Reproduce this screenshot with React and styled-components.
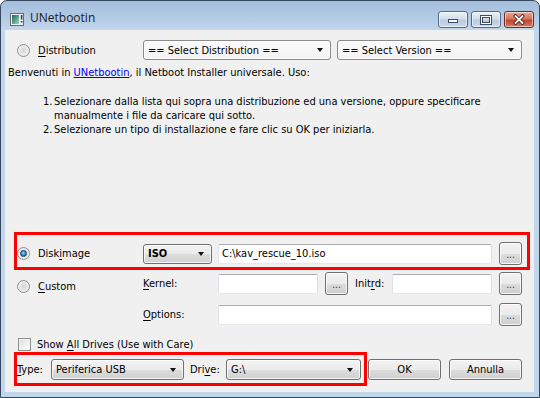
import React from 'react';
import styled, { createGlobalStyle, css } from 'styled-components';

const GlobalStyle = createGlobalStyle`
  html, body {
    margin: 0;
    padding: 0;
    background: #ffffff;
  }
  body {
    font-family: "DejaVu Sans Condensed", "Liberation Sans", sans-serif;
    font-size: 11px;
    color: #000000;
  }
`;

const Window = styled.div`
  box-sizing: border-box;
  width: 540px;
  height: 398px;
  display: flex;
  flex-direction: column;
  padding: 0 5px 5px 4px;
  border: 1px solid #36495e;
  border-radius: 7px 7px 0 0;
  background: linear-gradient(180deg, #a3bedc 0px, #b6cde6 20px, #c3d7ec 29px, #c3d7ec 100%);
`;

const TitleBar = styled.div`
  height: 29px;
  display: flex;
  align-items: flex-start;
  flex: none;
`;

const AppIcon = styled.svg`
  margin: 12px 0 0 5px;
  flex: none;
`;

const Title = styled.div`
  margin: 9px 0 0 6px;
  font-family: "Open Sans", "Noto Sans", sans-serif;
  font-size: 12px;
  line-height: 16px;
  color: #1b1b1b;
  flex: 1;
`;

const CaptionGroup = styled.div`
  display: flex;
  gap: 3px;
  margin-top: 10px;
`;

const CaptionButton = styled.div`
  box-sizing: border-box;
  width: 30px;
  height: 17px;
  display: flex;
  align-items: center;
  justify-content: center;
  border: 1px solid ${(p) => (p.danger ? '#6e2b23' : '#56698a')};
  border-radius: 3px;
  background: ${(p) =>
    p.danger
      ? 'linear-gradient(180deg, #eaa796 0%, #d4765f 45%, #c2442e 55%, #d77a60 100%)'
      : 'linear-gradient(180deg, #eaf0f8 0%, #d3deec 45%, #b9cbe0 55%, #cbd9eb 100%)'};
  box-shadow: inset 0 0 0 1px rgba(255, 255, 255, 0.55);
`;

const Client = styled.div`
  flex: 1;
  display: flex;
  flex-direction: column;
  padding: 10px 12px 12px 12px;
  background: #f0f0f0;
`;

const Row = styled.div`
  display: flex;
  align-items: center;
  height: ${(p) => p.h || 23}px;
  margin-top: ${(p) => p.mt || 0}px;
  flex: none;
`;

const Marked = styled.div`
  position: relative;
  display: flex;
  align-items: center;
  flex: ${(p) => (p.grow ? 1 : 'none')};
  height: 100%;
  &::after {
    content: '';
    position: absolute;
    top: ${(p) => p.t}px;
    left: ${(p) => p.l}px;
    right: ${(p) => p.r}px;
    bottom: ${(p) => p.b}px;
    border: 3px solid #ff0000;
    pointer-events: none;
  }
`;

const Choice = styled.div`
  width: 126px;
  display: flex;
  align-items: center;
  gap: 8px;
  flex: none;
  align-self: ${(p) => (p.top ? 'flex-start' : 'center')};
  margin-top: ${(p) => (p.top ? 8 : 0)}px;
`;

const Radio = styled.span`
  box-sizing: border-box;
  position: relative;
  width: 13px;
  height: 13px;
  flex: none;
  border-radius: 50%;
  border: 1px solid #8c8e8f;
  background: radial-gradient(circle at 50% 50%, #d4d4d4 0%, #e6e6e6 45%, #fbfbfb 100%);
  ${(p) =>
    p.checked &&
    css`
      &::after {
        content: '';
        position: absolute;
        left: 2px;
        top: 2px;
        width: 7px;
        height: 7px;
        border-radius: 50%;
        box-sizing: border-box;
        border: 1px solid #17405f;
        background: radial-gradient(circle at 45% 40%, #8fdcff 0%, #3296d8 45%, #10497a 100%);
      }
    `}
`;

const CheckBox = styled.span`
  box-sizing: border-box;
  width: 13px;
  height: 13px;
  flex: none;
  margin-left: 1px;
  border: 1px solid #8f8f8f;
  background: linear-gradient(135deg, #dcdcdc 0%, #f2f2f2 60%, #ffffff 100%);
  box-shadow: inset 0 0 0 1px #f4f4f4;
`;

const Key = styled.span`
  text-decoration: underline;
  text-underline-offset: 2px;
`;

const Label = styled.span`
  width: ${(p) => (p.w ? `${p.w}px` : 'auto')};
  flex: none;
  white-space: nowrap;
  margin-left: ${(p) => p.ml || 0}px;
`;

const Combo = styled.div`
  box-sizing: border-box;
  width: ${(p) => (p.w ? `${p.w}px` : 'auto')};
  flex: ${(p) => (p.w ? 'none' : 1)};
  height: ${(p) => p.h || 20}px;
  display: flex;
  align-items: center;
  justify-content: space-between;
  padding: 0 7px 0 4px;
  border: 1px solid ${(p) => (p.plain ? '#8a8a8a' : '#707070')};
  border-radius: 3px;
  font-weight: ${(p) => (p.bold ? 'bold' : 'normal')};
  background: ${(p) =>
    p.plain
      ? 'linear-gradient(180deg, #fbfbfb 0%, #f3f3f3 100%)'
      : 'linear-gradient(180deg, #f3f3f3 0%, #ebebeb 50%, #dddddd 51%, #d0d0d0 100%)'};
  box-shadow: inset 0 0 0 1px rgba(255, 255, 255, 0.75);
  white-space: nowrap;
  margin-right: ${(p) => p.mr || 0}px;
`;

const Arrow = styled.span`
  width: 0;
  height: 0;
  border-left: 3.5px solid transparent;
  border-right: 3.5px solid transparent;
  border-top: 4px solid #111111;
  flex: none;
`;

const Field = styled.div`
  box-sizing: border-box;
  width: ${(p) => (p.w ? `${p.w}px` : 'auto')};
  flex: ${(p) => (p.w ? 'none' : 1)};
  height: 20px;
  display: flex;
  align-items: center;
  padding-left: 3px;
  background: #ffffff;
  border: 1px solid;
  border-color: #abadb3 #dbdfe6 #e3e9ef #e2e3ea;
  border-radius: 2px;
  white-space: nowrap;
`;

const PushButton = styled.div`
  box-sizing: border-box;
  width: ${(p) => p.w}px;
  height: ${(p) => p.h}px;
  flex: none;
  display: flex;
  align-items: ${(p) => (p.dots ? 'flex-end' : 'center')};
  justify-content: center;
  padding-bottom: ${(p) => (p.dots ? 4 : 0)}px;
  margin-left: ${(p) => p.ml || 0}px;
  margin-right: ${(p) => p.mr || 0}px;
  border: 1px solid #707070;
  border-radius: 3px;
  background: linear-gradient(180deg, #f3f3f3 0%, #ebebeb 50%, #dddddd 51%, #cfcfcf 100%);
  box-shadow: inset 0 0 0 1px rgba(255, 255, 255, 0.8);
  color: ${(p) => (p.dots ? '#1d2f4a' : '#000000')};
  font-size: ${(p) => (p.dots ? 10 : 11)}px;
  line-height: 10px;
`;

const Intro = styled.p`
  margin: 6px 0 0 -9px;
  line-height: 14px;
  white-space: nowrap;
`;

const Link = styled.a`
  color: #0000ff;
  text-decoration: underline;
`;

const Steps = styled.ol`
  margin: 15px 0 0 0;
  padding: 0 0 0 26px;
  list-style: none;
  line-height: 14px;
`;

const Step = styled.li`
  display: flex;
  white-space: nowrap;
`;

const StepNum = styled.span`
  width: 11px;
  flex: none;
`;

const Spacer = styled.div`
  flex: 1;
`;

const Dots = ({ ml, mr }) => (
  <PushButton w={23} h={23} dots ml={ml} mr={mr}>
    ...
  </PushButton>
);

export default function App() {
  return (
    <>
      <GlobalStyle />
      <Window>
        <TitleBar>
          <AppIcon width="14" height="13" viewBox="0 0 14 13">
            <defs>
              <linearGradient id="iconFill" x1="0" y1="0" x2="1" y2="1">
                <stop offset="0" stopColor="#1d6a50" />
                <stop offset="1" stopColor="#96d6c6" />
              </linearGradient>
            </defs>
            <rect x="0.5" y="0.5" width="13" height="12" fill="#f1f1f1" stroke="#6a6a6a" />
            <rect x="2" y="2" width="7" height="9" fill="url(#iconFill)" />
            <rect x="10.8" y="2" width="1.6" height="4.5" fill="#1c3f7a" />
            <rect x="10.8" y="8" width="1.6" height="1.6" fill="#1c3f7a" />
          </AppIcon>
          <Title>UNetbootin</Title>
          <CaptionGroup>
            <CaptionButton>
              <svg width="12" height="8" viewBox="0 0 12 8">
                <rect x="1.5" y="3.5" width="9" height="3" fill="#ffffff" stroke="#3b4c63" />
              </svg>
            </CaptionButton>
            <CaptionButton>
              <svg width="12" height="10" viewBox="0 0 12 10">
                <rect x="1.5" y="1.5" width="9" height="7" fill="none" stroke="#3b4c63" strokeWidth="3" />
                <rect x="1.5" y="1.5" width="9" height="7" fill="none" stroke="#ffffff" strokeWidth="1" />
              </svg>
            </CaptionButton>
            <CaptionButton danger>
              <svg width="14" height="11" viewBox="0 0 14 11">
                <path d="M3.5 2 L10.5 9 M10.5 2 L3.5 9" stroke="#4a1a14" strokeWidth="3.4" strokeLinecap="square" />
                <path d="M3.5 2 L10.5 9 M10.5 2 L3.5 9" stroke="#ffffff" strokeWidth="1.8" strokeLinecap="square" />
              </svg>
            </CaptionButton>
          </CaptionGroup>
        </TitleBar>

        <Client>
          <Row h={20}>
            <Choice>
              <Radio />
              <Label>
                <Key>D</Key>istribution
              </Label>
            </Choice>
            <Combo w={188} mr={6} plain>
              == Select Distribution ==
              <Arrow />
            </Combo>
            <Combo plain>
              == Select Version ==
              <Arrow />
            </Combo>
          </Row>

          <Intro>
            Benvenuti in <Link>UNetbootin</Link>, il Netboot Installer universale. Uso:
          </Intro>
          <Steps>
            <Step>
              <StepNum>1.</StepNum>
              <span>
                Selezionare dalla lista qui sopra una distribuzione ed una versione, oppure specificare
                <br />
                manualmente i file da caricare qui sotto.
              </span>
            </Step>
            <Step>
              <StepNum>2.</StepNum>
              <span>Selezionare un tipo di installazione e fare clic su OK per iniziarla.</span>
            </Step>
          </Steps>

          <Spacer />

          <Row>
            <Marked grow t={-10} l={-3} r={-8} b={-5}>
              <Choice>
                <Radio checked />
                <Label>
                  Disk<Key>i</Key>mage
                </Label>
              </Choice>
              <Combo w={69} mr={6} bold>
                ISO
                <Arrow />
              </Combo>
              <Field>C:\kav_rescue_10.iso</Field>
              <Dots ml={7} />
            </Marked>
          </Row>

          <Row mt={7}>
            <Choice top>
              <Radio />
              <Label>
                <Key>C</Key>ustom
              </Label>
            </Choice>
            <Label w={75}>
              <Key>K</Key>ernel:
            </Label>
            <Field w={100} />
            <Dots ml={7} mr={7} />
            <Label w={37}>
              Init<Key>r</Key>d:
            </Label>
            <Field w={100} />
            <Dots ml={7} />
          </Row>

          <Row mt={8}>
            <Choice />
            <Label w={75}>
              <Key>O</Key>ptions:
            </Label>
            <Field />
            <Dots ml={7} />
          </Row>

          <Row h={14} mt={11}>
            <CheckBox />
            <Label ml={6}>
              Show <Key>A</Key>ll Drives (Use with Care)
            </Label>
          </Row>

          <Row h={21} mt={8}>
            <Marked t={-7} l={-3} r={-6} b={-6}>
              <Label w={34}>
                <Key>T</Key>ype:
              </Label>
              <Combo w={133} h={21} mr={6}>
                Periferica USB
                <Arrow />
              </Combo>
              <Label w={36}>
                Dri<Key>v</Key>e:
              </Label>
              <Combo w={135} h={21}>
                G:\
                <Arrow />
              </Combo>
            </Marked>
            <PushButton w={73} h={21} ml={7}>
              OK
            </PushButton>
            <PushButton w={73} h={21} ml={8}>
              Annulla
            </PushButton>
          </Row>
        </Client>
      </Window>
    </>
  );
}
